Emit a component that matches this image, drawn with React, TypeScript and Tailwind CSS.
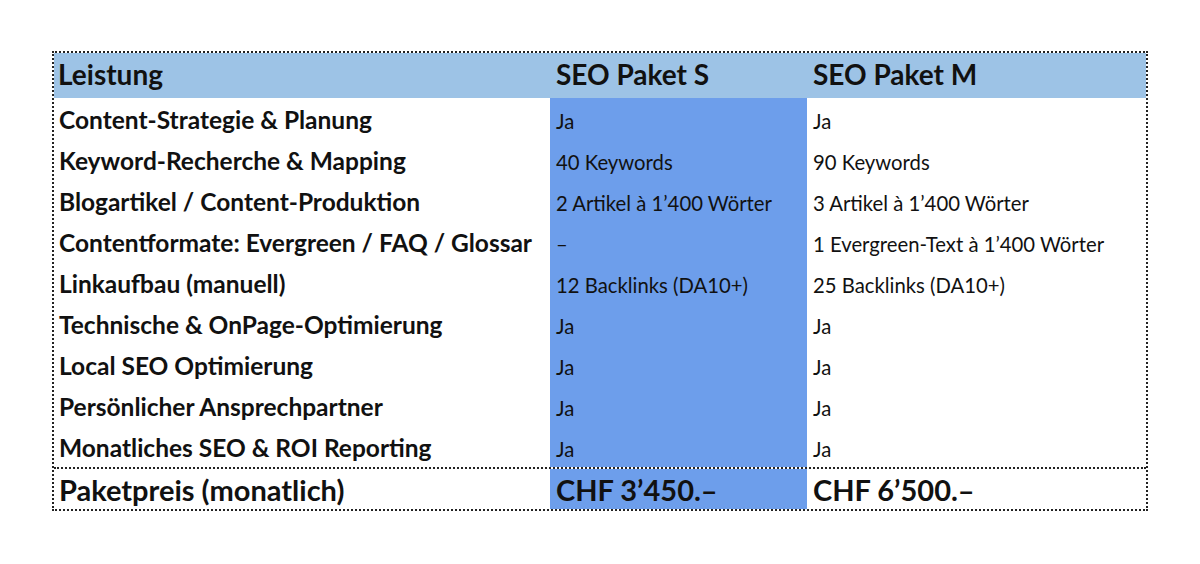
const rows = [
  { label: 'Content-Strategie & Planung', s: 'Ja', m: 'Ja' },
  { label: 'Keyword-Recherche & Mapping', s: '40 Keywords', m: '90 Keywords' },
  { label: 'Blogartikel / Content-Produktion', s: '2 Artikel à 1’400 Wörter', m: '3 Artikel à 1’400 Wörter' },
  { label: 'Contentformate: Evergreen / FAQ / Glossar', s: '–', m: '1 Evergreen-Text à 1’400 Wörter' },
  { label: 'Linkaufbau (manuell)', s: '12 Backlinks (DA10+)', m: '25 Backlinks (DA10+)' },
  { label: 'Technische & OnPage-Optimierung', s: 'Ja', m: 'Ja' },
  { label: 'Local SEO Optimierung', s: 'Ja', m: 'Ja' },
  { label: 'Persönlicher Ansprechpartner', s: 'Ja', m: 'Ja' },
  { label: 'Monatliches SEO & ROI Reporting', s: 'Ja', m: 'Ja' },
];

export default function App() {
  return (
    <div className="w-[1200px] h-[564px] bg-white pt-[51px] pl-[52px] font-['Lato','Noto_Sans',sans-serif] text-[#111]">
      <div className="w-[1096px] border-2 border-dotted border-[#222]">
        {/* Header */}
        <div className="grid grid-cols-[496px_257px_1fr] h-[45px] bg-[#9dc3e6] text-[28px] font-bold leading-none">
          <div className="flex items-end pl-[4px] pb-[10px]">Leistung</div>
          <div className="flex items-end pl-[6px] pb-[10px]">SEO Paket S</div>
          <div className="flex items-end pl-[6px] pb-[10px]">SEO Paket M</div>
        </div>

        {/* Leistungen */}
        {rows.map((row) => (
          <div key={row.label} className="grid grid-cols-[496px_257px_1fr] h-[41px] leading-none">
            <div className="flex items-end pl-[5px] pb-[7px] text-[24.5px] font-bold whitespace-nowrap">{row.label}</div>
            <div className="flex items-end pl-[6px] pb-[8px] text-[20.3px] bg-[#6d9eeb] whitespace-nowrap">{row.s}</div>
            <div className="flex items-end pl-[6px] pb-[8px] text-[20.3px] whitespace-nowrap">{row.m}</div>
          </div>
        ))}

        {/* Preis */}
        <div className="grid grid-cols-[496px_257px_1fr] h-[42px] border-t-2 border-dotted border-[#222] text-[29px] font-bold leading-none">
          <div className="flex items-end pl-[5px] pb-[5px]">Paketpreis (monatlich)</div>
          <div className="flex items-end pl-[6px] pb-[5px] bg-[#6d9eeb]">CHF 3’450.–</div>
          <div className="flex items-end pl-[6px] pb-[5px]">CHF 6’500.–</div>
        </div>
      </div>
    </div>
  );
}
